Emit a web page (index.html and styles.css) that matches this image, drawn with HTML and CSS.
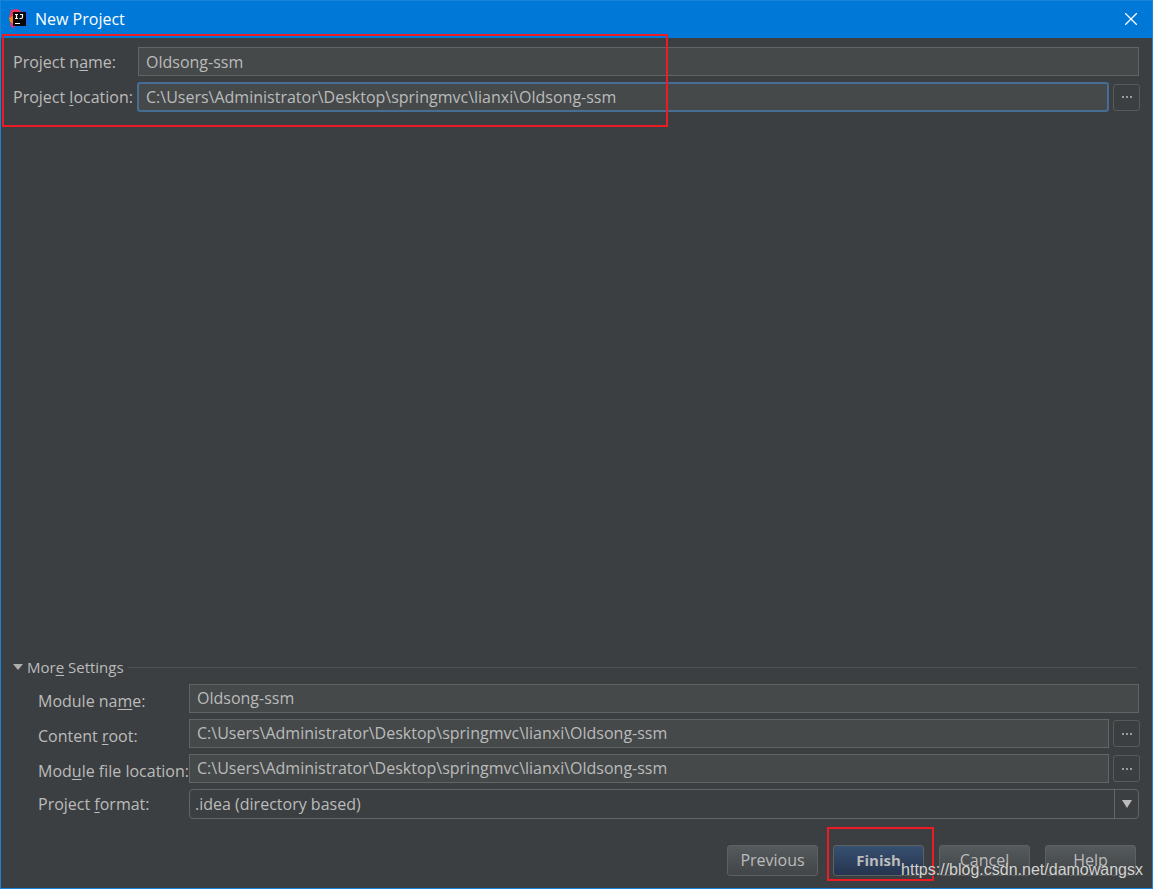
FILE: index.html
```html
<!DOCTYPE html>
<html lang="en">
<head>
<meta charset="utf-8">
<title>New Project</title>
<link rel="stylesheet" href="styles.css">
</head>
<body>
<main class="window">
  <header class="titlebar">
    <svg class="logo" viewBox="0 0 20 20" aria-hidden="true">
      <path d="M2 1 8 0 14 3 10 16 3 19 1 16 2 12 0 9Z" fill="#f0325f"/>
      <path d="M0 9 4 7 5 15 1 13Z" fill="#f58220"/>
      <path d="M12 2 17 1 20 6 19 15 13 19 9 16Z" fill="#1769e8"/>
      <path d="M3 15h6l-5 4Z" fill="#b23bb5"/>
      <path d="M4 3h13v14H4Z" fill="#080808"/>
      <path d="M6 5.500h3M7.500 5.500v4M6 9.500h3M11 5.500h2.500v2.500q0 1.500-1.500 1.500H10.500M6 14.500h5" fill="none" stroke="#fff" stroke-width="1.200"/>
    </svg>
    <h1 class="title">New Project</h1>
    <button class="close" type="button" aria-label="Close">
      <svg viewBox="0 0 12 12" width="12" height="12"><path d="M0 0 12 12M12 0 0 12" stroke="#fff" stroke-width="1.300"/></svg>
    </button>
  </header>
  <form class="content">
    <section class="project">
      <div class="row">
        <label class="label" for="name">Project n<u>a</u>me:</label>
        <input class="field" id="name" type="text" value="Oldsong-ssm">
      </div>
      <div class="row">
        <label class="label" for="location">Project <u>l</u>ocation:</label>
        <input class="field active" id="location" type="text" value="C:\Users\Administrator\Desktop\springmvc\lianxi\Oldsong-ssm">
        <button class="browse" type="button" aria-label="Browse project location"><svg viewBox="0 0 10 2" width="10" height="2"><path d="M0 0h2v2H0zM4 0h2v2H4zM8 0h2v2H8z" fill="#999b9c"/></svg></button>
      </div>
      <div class="mark mark-project"></div>
    </section>
    <section class="more">
      <h2 class="more-title">
        <svg viewBox="0 0 10 6" width="10" height="6"><path d="M0 0h10L5 6Z" fill="#adadad"/></svg>
        <span>Mor<u>e</u> Settings</span>
      </h2>
      <div class="settings">
        <div class="row">
          <label class="label low" for="module">Module na<u>m</u>e:</label>
          <input class="field" id="module" type="text" value="Oldsong-ssm">
        </div>
        <div class="row">
          <label class="label low" for="root">Content <u>r</u>oot:</label>
          <input class="field" id="root" type="text" value="C:\Users\Administrator\Desktop\springmvc\lianxi\Oldsong-ssm">
          <button class="browse" type="button" aria-label="Browse content root"><svg viewBox="0 0 10 2" width="10" height="2"><path d="M0 0h2v2H0zM4 0h2v2H4zM8 0h2v2H8z" fill="#999b9c"/></svg></button>
        </div>
        <div class="row">
          <label class="label low" for="file">Mod<u>u</u>le file location:</label>
          <input class="field" id="file" type="text" value="C:\Users\Administrator\Desktop\springmvc\lianxi\Oldsong-ssm">
          <button class="browse" type="button" aria-label="Browse module file location"><svg viewBox="0 0 10 2" width="10" height="2"><path d="M0 0h2v2H0zM4 0h2v2H4zM8 0h2v2H8z" fill="#999b9c"/></svg></button>
        </div>
        <div class="row">
          <label class="label" for="format">Project <u>f</u>ormat:</label>
          <div class="combo">
            <select class="select" id="format"><option>.idea (directory based)</option></select>
            <span class="arrow"><svg viewBox="0 0 10 8" width="10" height="8"><path d="M0 0h10L5 8Z" fill="#bbb"/></svg></span>
          </div>
        </div>
      </div>
    </section>
    <footer class="actions">
      <button class="button" type="button">Previous</button>
      <div class="finish">
        <button class="button primary" type="button">Finish</button>
        <div class="mark mark-finish"></div>
      </div>
      <button class="button" type="button">Cancel</button>
      <button class="button" type="button">Help</button>
    </footer>
  </form>
  <div class="watermark">https://blog.csdn.net/damowangsx</div>
</main>
</body>
</html>
```
FILE: styles.css
```css
* { box-sizing: border-box; }

body {
  margin: 0;
  background: #3c3f41;
}

button,
input,
select {
  margin: 0;
  color: inherit;
  font: inherit;
}

.window {
  position: relative;
  display: flex;
  flex-direction: column;
  min-height: 100vh;
  border: 1px solid #1883d7;
  background: #3c3f41;
  color: #bbb;
  font: 16px/20px "Open Sans", "Noto Sans", sans-serif;
}

.titlebar {
  display: flex;
  align-items: center;
  height: 37px;
  padding: 0 14px 1px 8px;
  background: #0078d7;
  color: #fff;
}

.logo {
  width: 20px;
  height: 20px;
  margin-right: 6px;
}

.title {
  flex: 1;
  margin: 0;
  font-size: 16px;
  font-weight: 400;
}

.close {
  display: flex;
  padding: 1px;
  border: 0;
  background: none;
}

.content {
  flex: 1;
  display: flex;
  flex-direction: column;
  padding: 9px 13px 12px 12px;
}

.project {
  position: relative;
  display: flex;
  flex-direction: column;
  gap: 6px;
}

.row {
  display: flex;
  align-items: center;
}

.label {
  flex: none;
  width: 125px;
  white-space: nowrap;
}

u {
  text-underline-offset: 2px;
  text-decoration-thickness: 1px;
}

.field {
  flex: 1;
  min-width: 0;
  height: 29px;
  padding: 0 7px;
  border: 1px solid #646464;
  border-radius: 0;
  outline: none;
  background: #45494a;
}

.field.active {
  height: 30px;
  margin-left: -1px;
  border: 2px solid #466d94;
  border-radius: 3px;
}

.browse {
  display: flex;
  align-items: center;
  justify-content: center;
  width: 27px;
  height: 27px;
  margin: 0 -1px 0 4px;
  padding: 0;
  border: 1px solid #585a5b;
  border-radius: 3px;
  background: none;
}

.more {
  margin-top: auto;
}

.more-title {
  display: flex;
  align-items: center;
  gap: 4px;
  margin: 0 0 7px;
  font-size: 15px;
  font-weight: 400;
}

.more-title::after {
  content: "";
  flex: 1;
  height: 1px;
  margin-right: 2px;
  background: #515151;
}

.settings {
  display: flex;
  flex-direction: column;
  gap: 6px;
  padding-left: 25px;
}

.settings .label {
  width: 151px;
}

.settings .low {
  padding-top: 4px;
}

.settings .field {
  padding-bottom: 1px;
}

.combo {
  flex: 1;
  display: flex;
  height: 30px;
  border: 1px solid #646464;
  border-radius: 4px;
}

.select {
  flex: 1;
  min-width: 0;
  padding: 0 5px;
  border: 0;
  outline: none;
  background: none;
  appearance: none;
}

.arrow {
  display: flex;
  align-items: center;
  justify-content: center;
  width: 24px;
  border-left: 1px solid #646464;
}

.actions {
  display: flex;
  justify-content: flex-end;
  gap: 15px;
  margin-top: 26px;
  padding-right: 3px;
}

.button {
  width: 91px;
  height: 31px;
  padding: 0 0 1px;
  border: 1px solid #5e6162;
  border-radius: 3px;
  background: linear-gradient(#555a5c, #414547);
}

.primary {
  background: linear-gradient(#375070, #26344f);
  font-size: 15px;
  font-weight: 700;
}

.finish {
  position: relative;
}

.mark {
  position: absolute;
  border: 2px solid #ed1c24;
  pointer-events: none;
}

.mark-project {
  top: -13px;
  left: -11px;
  width: 666px;
  height: 93px;
}

.mark-finish {
  top: -18px;
  left: -6px;
  width: 107px;
  height: 54px;
}

.watermark {
  position: absolute;
  right: 9px;
  bottom: 8px;
  color: #d2d3d3;
  font: 16px/20px "Liberation Sans", Arial, sans-serif;
  text-shadow: 1px 1px 1px #444;
}
```
